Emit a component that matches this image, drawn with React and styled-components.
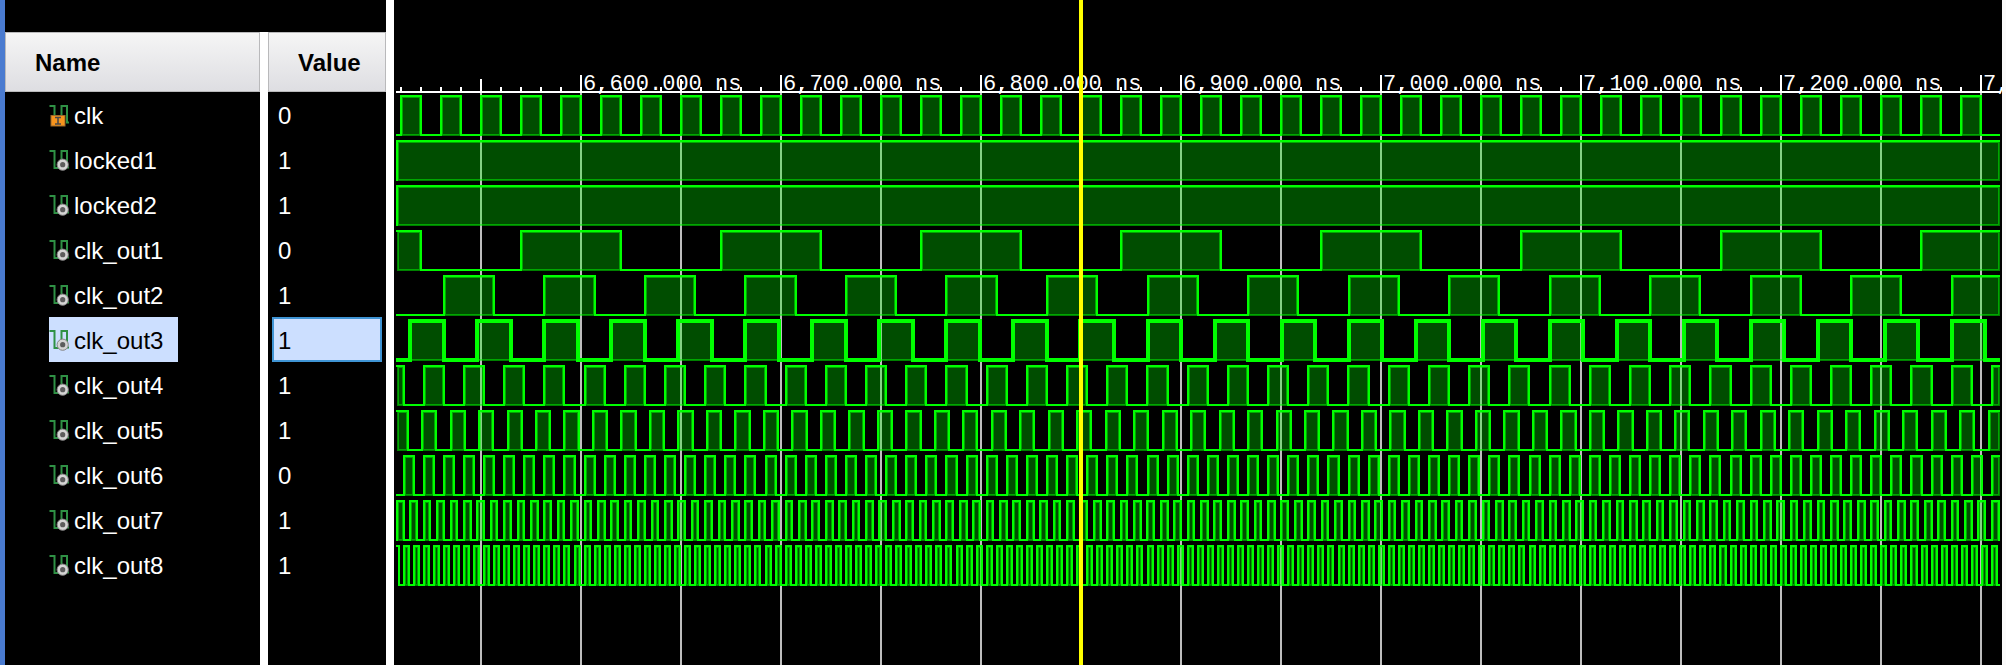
import React, { useLayoutEffect, useRef, useState } from "react";
import styled, { createGlobalStyle, css } from "styled-components";

const GlobalStyle = createGlobalStyle`
  * { box-sizing: border-box; }
  html, body, #root { height: 100%; }
  body { margin: 0; background: #fafafa; overflow: hidden; }
`;

const ROW = 45;

const Viewer = styled.main`
  display: flex;
  min-height: 100%;
  padding-right: 4px;
  border-left: 5px solid #4a7bd0;
  background: #fafafa;
  font-family: "Liberation Sans", Arial, sans-serif;
  font-size: 24px;
  color: #fff;
`;

const SignalPanel = styled.section`
  flex: none;
  display: flex;
  flex-direction: column;
  padding-top: 32px;
  background: #000;
`;

const SignalTable = styled.table`
  flex: 1;
  display: grid;
  grid-template-columns: 255px 118px;
  grid-template-rows: 60px repeat(11, ${ROW}px) 1fr;
  column-gap: 8px;
  background: linear-gradient(#fff, #fff) 255px 0 / 8px 100% no-repeat;

  thead, tbody, tr { display: contents; }
`;

const HeadCell = styled.th`
  display: flex;
  align-items: center;
  padding: 2px 29px 0;
  border: 1px solid #b9b9bb;
  background: linear-gradient(#f5f5f5, #dedee2);
  color: #000;
  font-weight: bold;
  text-align: left;
`;

const NameCell = styled.td`
  display: flex;
  padding: 0 0 0 44px;
`;

const SignalName = styled.span`
  display: flex;
  align-items: center;
  gap: 5px;
  padding: 2px 15px 0 0;
  ${(p) => p.$selected && css`
    background: #ccdfff;
    color: #000;
  `}
`;

const ValueCell = styled.td`
  display: flex;
  align-items: center;
  margin: 0 4px;
  padding: 2px 4px 0;
  border: 2px solid transparent;
  ${(p) => p.$selected && css`
    border-color: #3f94d4;
    background: #ccdfff;
    color: #000;
  `}
`;

const Divider = styled.div`
  flex: none;
  width: 8px;
  background: #fff;
`;

const WavePanel = styled.section`
  flex: 1;
  min-width: 0;
  position: relative;
  background: #000;
`;

const WaveDrawing = styled.svg`
  position: absolute;
  inset: 0;
  width: 100%;
  height: 100%;
  display: block;
`;

const RulerText = styled.text`
  fill: #fff;
  font-family: "Liberation Mono", "Courier New", monospace;
  font-size: 22px;
`;

const Icon = styled.svg`
  flex: none;
  width: 20px;
  height: 22px;
`;

function SignalIcon({ input }) {
  return (
    <Icon viewBox="0 0 20 22" aria-hidden="true">
      <path d="M0.500 1H5.500V18H12.500V1H18V17.500H20" fill="none" stroke="#2f9145" strokeWidth="2" />
      {input ? (
        <g>
          <rect x="2" y="10.500" width="14" height="10.500" fill="#f7941d" stroke="#9b6a2c" />
          <path d="M6 12.500h6M6 19h6M9 12.500v6.500" fill="none" stroke="#4a4a4a" strokeWidth="1.600" />
        </g>
      ) : (
        <g>
          <circle cx="13.700" cy="14.700" r="5.600" fill="#d4d4d4" stroke="#858585" />
          <circle cx="13.700" cy="14.700" r="2.600" fill="#5c5c5c" />
        </g>
      )}
    </Icon>
  );
}

/* start, period and high time are pixels on the time axis (2 px per ns). */
const SIGNALS = [
  { name: "clk", value: 0, input: true, start: 7, period: 40, high: 20 },
  { name: "locked1", value: 1, constant: true },
  { name: "locked2", value: 1, constant: true },
  { name: "clk_out1", value: 0, start: 127, period: 200, high: 100 },
  { name: "clk_out2", value: 1, start: 50.33, period: 100.53, high: 50.2 },
  { name: "clk_out3", value: 1, selected: true, start: 16.8, period: 67.02, high: 33.5 },
  { name: "clk_out4", value: 1, start: 30.2, period: 40.208, high: 20.15 },
  { name: "clk_out5", value: 1, start: 28.587, period: 28.481, high: 14.24 },
  { name: "clk_out6", value: 0, start: 10.12, period: 20.105, high: 10.05 },
  { name: "clk_out7", value: 1, start: 16.82, period: 13.4027, high: 6.7 },
  { name: "clk_out8", value: 1, start: 10.12, period: 10.0525, high: 5.03 },
];

const LEFT = 2;
const AXIS_Y = 92;
const CURSOR_X = 687;

function pulses(signal, right) {
  if (signal.constant) return [[LEFT + 1, right]];
  const list = [];
  for (let k = -2; signal.start + k * signal.period < right; k += 1) {
    const rise = Math.floor(signal.start + k * signal.period);
    const fall = Math.floor(signal.start + k * signal.period + signal.high);
    if (fall > LEFT) list.push([rise, fall]);
  }
  return list;
}

function Wave({ signal, index, right }) {
  const top = 96 + index * ROW;
  const bottom = top + 39;
  const list = pulses(signal, right);
  const startsHigh = list[0][0] <= LEFT;
  let line = `M${LEFT} ${startsHigh ? top : bottom}`;
  list.forEach(([rise, fall]) => {
    if (rise > LEFT) line += `H${rise}V${top}`;
    line += fall < right ? `H${fall}V${bottom}` : `H${right}`;
  });
  if (list[list.length - 1][1] < right) line += `H${right}`;
  return (
    <g>
      {list.map(([rise, fall]) => {
        const x = Math.max(rise, LEFT + 1) + 1;
        const box = {
          x,
          y: top + 1,
          width: Math.max(Math.min(fall, right) - 1 - x, 0),
          height: bottom - top - 1,
        };
        return (
          <g key={rise}>
            <rect {...box} fill="#00ff00" fillOpacity="0.3" />
            <rect {...box} fill="none" stroke="#00ff00" strokeWidth="2" strokeOpacity="0.5" />
          </g>
        );
      })}
      {/* the low level and edges are bright; a pulse keeps its dim lower border */}
      <path d={line} fill="none" stroke="#00ff00" strokeWidth={signal.selected ? 4 : 2} />
    </g>
  );
}

function Waveform() {
  const ref = useRef(null);
  const [width, setWidth] = useState(1608);
  useLayoutEffect(() => {
    const measure = () => setWidth(ref.current.clientWidth);
    measure();
    window.addEventListener("resize", measure);
    return () => window.removeEventListener("resize", measure);
  }, []);
  const right = width - 2;
  const ticks = [];
  for (let x = 7, n = 0; x < right; x += 20, n += 1) ticks.push([x, n % 10 === 9 ? 75 : n % 5 === 4 ? 79 : 87]);
  const grid = ticks.filter(([, y]) => y < 87);
  const majors = ticks.filter(([, y]) => y === 75);
  return (
    <WavePanel ref={ref} aria-label="Waveform">
      <WaveDrawing shapeRendering="crispEdges">
        {grid.map(([x]) => <line key={x} x1={x} x2={x} y1={AXIS_Y} y2="100%" stroke="#bebebe" strokeWidth="2" />)}
        {ticks.map(([x, y]) => <line key={x} x1={x} x2={x} y1={y} y2={AXIS_Y} stroke="#fff" strokeWidth="2" />)}
        <line x1={LEFT} x2={width - 1} y1={AXIS_Y} y2={AXIS_Y} stroke="#fff" strokeWidth="2" />
        {majors.map(([x], i) => {
          const t = 6600 + i * 100;
          return <RulerText key={x} x={x + 2} y="90">{`${Math.floor(t / 1000)},${String(t % 1000).padStart(3, "0")}.000 ns`}</RulerText>;
        })}
        {SIGNALS.map((s, i) => <Wave key={s.name} signal={s} index={i} right={right} />)}
        <line x1={CURSOR_X} x2={CURSOR_X} y1="0" y2="100%" stroke="#ffff00" strokeWidth="4" />
      </WaveDrawing>
    </WavePanel>
  );
}

export default function App() {
  return (
    <>
      <GlobalStyle />
      <Viewer>
        <SignalPanel>
          <SignalTable>
            <thead>
              <tr>
                <HeadCell scope="col">Name</HeadCell>
                <HeadCell scope="col">Value</HeadCell>
              </tr>
            </thead>
            <tbody>
              {SIGNALS.map((s) => (
                <tr key={s.name}>
                  <NameCell>
                    <SignalName $selected={s.selected}>
                      <SignalIcon input={s.input} />
                      {s.name}
                    </SignalName>
                  </NameCell>
                  <ValueCell $selected={s.selected}>{s.value}</ValueCell>
                </tr>
              ))}
            </tbody>
          </SignalTable>
        </SignalPanel>
        <Divider />
        <Waveform />
      </Viewer>
    </>
  );
}
